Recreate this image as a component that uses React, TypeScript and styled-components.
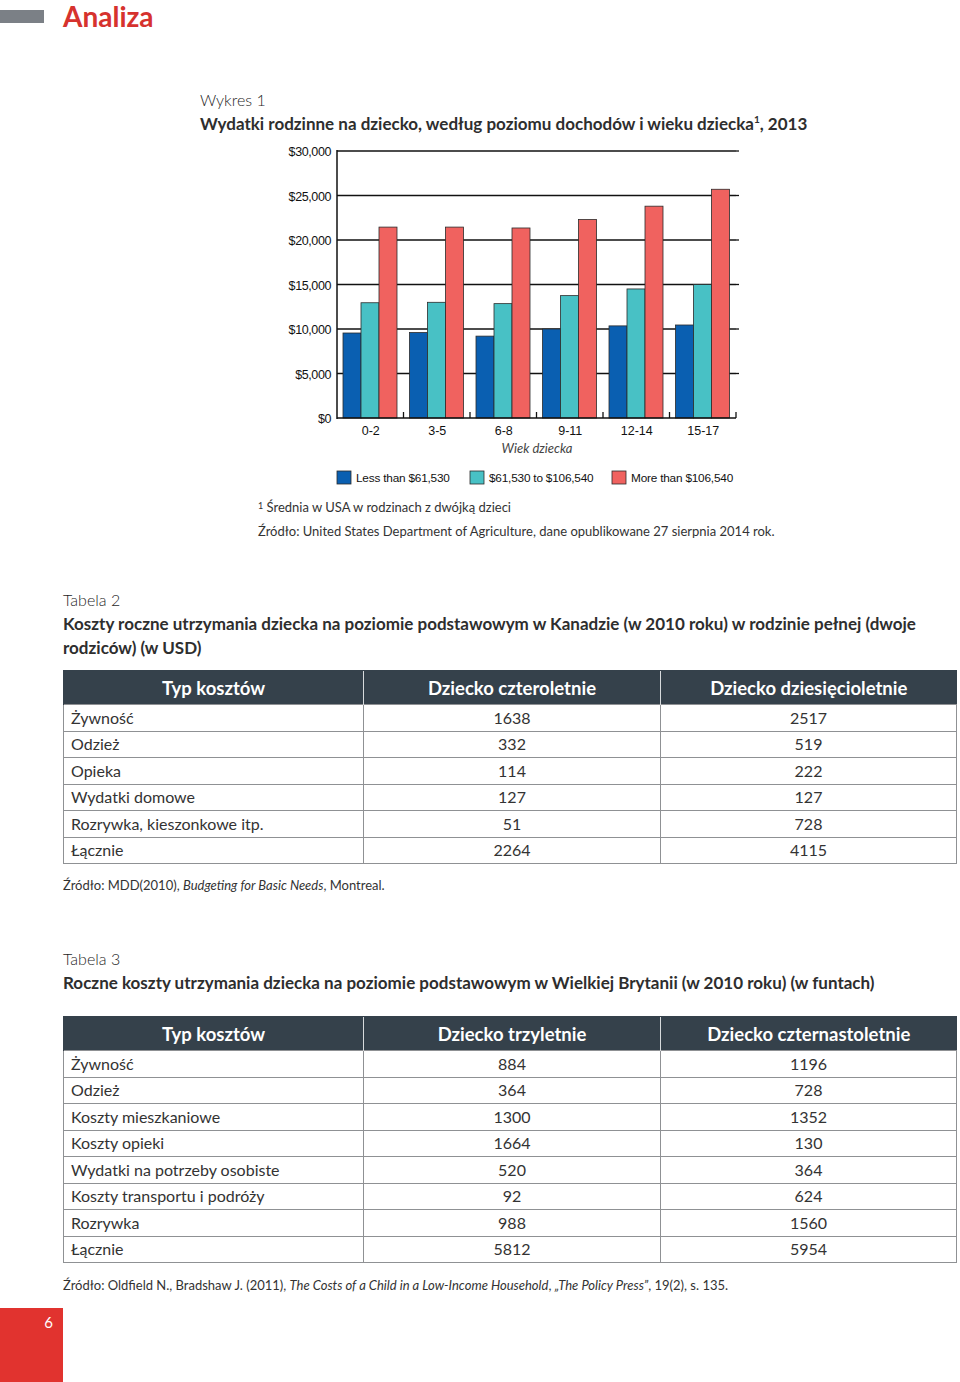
import React from 'react';
import styled, { createGlobalStyle } from 'styled-components';

const GlobalStyle = createGlobalStyle`
  body {
    margin: 0;
    background: #ffffff;
    font-family: Lato, 'Open Sans', sans-serif;
    color: #333333;
  }
`;

const Page = styled.div`
  width: 960px;
  min-height: 1382px;
  display: flex;
  flex-direction: column;
`;

const Header = styled.header`
  display: flex;
  align-items: center;
  height: 32px;
`;

const GreyBar = styled.div`
  width: 44px;
  height: 13px;
  background: #7b8086;
`;

const PageTitle = styled.h1`
  margin: 0 0 0 19px;
  font-size: 28px;
  font-weight: 700;
  color: #d6322e;
  line-height: 32px;
`;

const Section = styled.section<{ $indent: number; $top: number }>`
  padding-left: ${(p) => p.$indent}px;
  margin-top: ${(p) => p.$top}px;
`;

const Caption = styled.div`
  font-size: 16px;
  line-height: 24px;
  font-weight: 300;
  color: #1f1f1f;
`;

const Heading = styled.div`
  font-size: 17px;
  line-height: 24px;
  font-weight: 700;
  color: #2e2e2e;
  padding-right: 30px;

  sup {
    font-size: 10px;
    line-height: 0;
  }
`;

const ChartSvg = styled.svg`
  display: block;
  margin: 4px 0 0 70px;
`;

const Notes = styled.div`
  margin: 5px 0 0 58px;
  font-size: 13px;
  line-height: 24px;
  color: #333;

  sup {
    font-size: 9px;
    line-height: 0;
    vertical-align: 3px;
  }
`;

const Table = styled.table<{ $top: number }>`
  margin-top: ${(p) => p.$top}px;
  width: 893px;
  border-collapse: collapse;
  table-layout: fixed;
`;

const HeadCell = styled.th`
  background: #35414b;
  color: #ffffff;
  font-size: 18.5px;
  font-weight: 700;
  height: 33px;
  padding: 0;
  text-align: center;
  border-left: 1px solid #d7dadc;
  border-top: 1px solid #35414b;
  &:first-child {
    border-left: 1px solid #35414b;
  }
`;

const Cell = styled.td<{ $label?: boolean }>`
  height: 25.5px;
  padding: 0 0 0 ${(p) => (p.$label ? '7px' : '0')};
  font-size: 16px;
  line-height: 20px;
  color: #333;
  text-align: ${(p) => (p.$label ? 'left' : 'center')};
  border: 1px solid #8f9194;
`;

const Source = styled.div<{ $top: number }>`
  margin-top: ${(p) => p.$top}px;
  font-size: 13px;
  line-height: 24px;
  color: #333;
`;

const PageNumber = styled.div`
  margin-top: 11px;
  width: 63px;
  height: 74px;
  box-sizing: border-box;
  background: #e1332f;
  color: #ffffff;
  font-size: 15px;
  text-align: right;
  padding: 5px 10px 0 0;
`;

const AXIS_LABEL = { fontFamily: "'Liberation Sans', Arial, sans-serif", fontSize: 12.5, fill: '#111' };

const ages = ['0-2', '3-5', '6-8', '9-11', '12-14', '15-17'];
const series = [
  { color: '#0a5fb1', values: [9550, 9600, 9200, 10000, 10350, 10450] },
  { color: '#48c1c5', values: [12950, 13000, 12850, 13750, 14500, 15000] },
  { color: '#f0625f', values: [21450, 21450, 21350, 22300, 23800, 25700] },
];
const legend = [
  { color: '#0a5fb1', label: 'Less than $61,530', x: 67 },
  { color: '#48c1c5', label: '$61,530 to $106,540', x: 200 },
  { color: '#f0625f', label: 'More than $106,540', x: 342 },
];

const BASE = 278;
const LEFT = 67;
const RIGHT = 466;
const GROUP = (RIGHT - LEFT) / 6;
const scale = (v: number) => (v * 44.5) / 5000;

const Chart = () => (
  <ChartSvg width={480} height={350} viewBox="0 0 480 350">
    {[0, 1, 2, 3, 4, 5, 6].map((i) => {
      const y = BASE - i * 44.5;
      return (
        <g key={i}>
          {i > 0 && <line x1={LEFT} x2={RIGHT} y1={y} y2={y} stroke="#111" strokeWidth={1.3} />}
          {i > 0 && <line x1={RIGHT} x2={RIGHT + 3} y1={y} y2={y} stroke="#111" strokeWidth={1.3} />}
          <text x={61} y={y + 5} textAnchor="end" {...AXIS_LABEL} letterSpacing={-0.4}>
            ${(i * 5).toString()}{i > 0 ? ',000' : ''}
          </text>
        </g>
      );
    })}
    {ages.map((age, g) => {
      const start = LEFT + g * GROUP;
      return (
        <g key={age}>
          {series.map((s, k) => (
            <rect
              key={k}
              x={start + 6 + k * 18}
              y={BASE - scale(s.values[g])}
              width={18}
              height={scale(s.values[g])}
              fill={s.color}
              stroke="#2b2b2b"
              strokeWidth={0.8}
            />
          ))}
          <line x1={start + GROUP} x2={start + GROUP} y1={BASE - 6} y2={BASE} stroke="#111" strokeWidth={1.3} />
          <text x={start + GROUP / 2 + 0.5} y={295} textAnchor="middle" {...AXIS_LABEL}>
            {age}
          </text>
        </g>
      );
    })}
    <line x1={LEFT} x2={LEFT} y1={10} y2={BASE + 1} stroke="#111" strokeWidth={1.5} />
    <line x1={LEFT} x2={RIGHT} y1={BASE} y2={BASE} stroke="#111" strokeWidth={1.5} />
    <text
      x={267}
      y={313}
      textAnchor="middle"
      fontFamily="Lato, sans-serif"
      fontStyle="italic"
      fontSize={13}
      fill="#444"
    >
      Wiek dziecka
    </text>
    {legend.map((l) => (
      <g key={l.label}>
        <rect x={l.x} y={331} width={14} height={13} fill={l.color} stroke="#2b2b2b" strokeWidth={0.8} />
        <text x={l.x + 19} y={342} {...AXIS_LABEL} fontSize={11.8} letterSpacing={-0.2}>
          {l.label}
        </text>
      </g>
    ))}
  </ChartSvg>
);

type Row = [string, string, string];

const canada: Row[] = [
  ['Żywność', '1638', '2517'],
  ['Odzież', '332', '519'],
  ['Opieka', '114', '222'],
  ['Wydatki domowe', '127', '127'],
  ['Rozrywka, kieszonkowe itp.', '51', '728'],
  ['Łącznie', '2264', '4115'],
];

const britain: Row[] = [
  ['Żywność', '884', '1196'],
  ['Odzież', '364', '728'],
  ['Koszty mieszkaniowe', '1300', '1352'],
  ['Koszty opieki', '1664', '130'],
  ['Wydatki na potrzeby osobiste', '520', '364'],
  ['Koszty transportu i podróży', '92', '624'],
  ['Rozrywka', '988', '1560'],
  ['Łącznie', '5812', '5954'],
];

const CostTable = ({ top, heads, rows }: { top: number; heads: Row; rows: Row[] }) => (
  <Table $top={top}>
    <colgroup>
      <col style={{ width: 300 }} />
      <col style={{ width: 297 }} />
      <col style={{ width: 296 }} />
    </colgroup>
    <thead>
      <tr>
        {heads.map((h) => (
          <HeadCell key={h}>{h}</HeadCell>
        ))}
      </tr>
    </thead>
    <tbody>
      {rows.map((r) => (
        <tr key={r[0]}>
          <Cell $label>{r[0]}</Cell>
          <Cell>{r[1]}</Cell>
          <Cell>{r[2]}</Cell>
        </tr>
      ))}
    </tbody>
  </Table>
);

export default function App() {
  return (
    <Page>
      <GlobalStyle />
      <Header>
        <GreyBar />
        <PageTitle>Analiza</PageTitle>
      </Header>

      <Section $indent={200} $top={56}>
        <Caption>Wykres 1</Caption>
        <Heading>
          Wydatki rodzinne na dziecko, według poziomu dochodów i wieku dziecka<sup>1</sup>, 2013
        </Heading>
        <Chart />
        <Notes>
          <div>
            <sup>1</sup> Średnia w USA w rodzinach z dwójką dzieci
          </div>
          <div>Źródło: United States Department of Agriculture, dane opublikowane 27 sierpnia 2014 rok.</div>
        </Notes>
      </Section>

      <Section $indent={63} $top={45}>
        <Caption>Tabela 2</Caption>
        <Heading>
          Koszty roczne utrzymania dziecka na poziomie podstawowym w Kanadzie (w 2010 roku) w rodzinie pełnej (dwoje
          rodziców) (w USD)
        </Heading>
        <CostTable top={10} heads={['Typ kosztów', 'Dziecko czteroletnie', 'Dziecko dziesięcioletnie']} rows={canada} />
        <Source $top={9}>
          Źródło: MDD(2010), <i>Budgeting for Basic Needs</i>, Montreal.
        </Source>
      </Section>

      <Section $indent={63} $top={50}>
        <Caption>Tabela 3</Caption>
        <Heading>
          Roczne koszty utrzymania dziecka na poziomie podstawowym w Wielkiej Brytanii (w 2010 roku) (w funtach)
        </Heading>
        <CostTable top={21} heads={['Typ kosztów', 'Dziecko trzyletnie', 'Dziecko czternastoletnie']} rows={britain} />
        <Source $top={10}>
          Źródło: Oldfield N., Bradshaw J. (2011), <i>The Costs of a Child in a Low-Income Household</i>,{' '}
          <i>„The Policy Press”</i>, 19(2), s. 135.
        </Source>
      </Section>

      <PageNumber>6</PageNumber>
    </Page>
  );
}
